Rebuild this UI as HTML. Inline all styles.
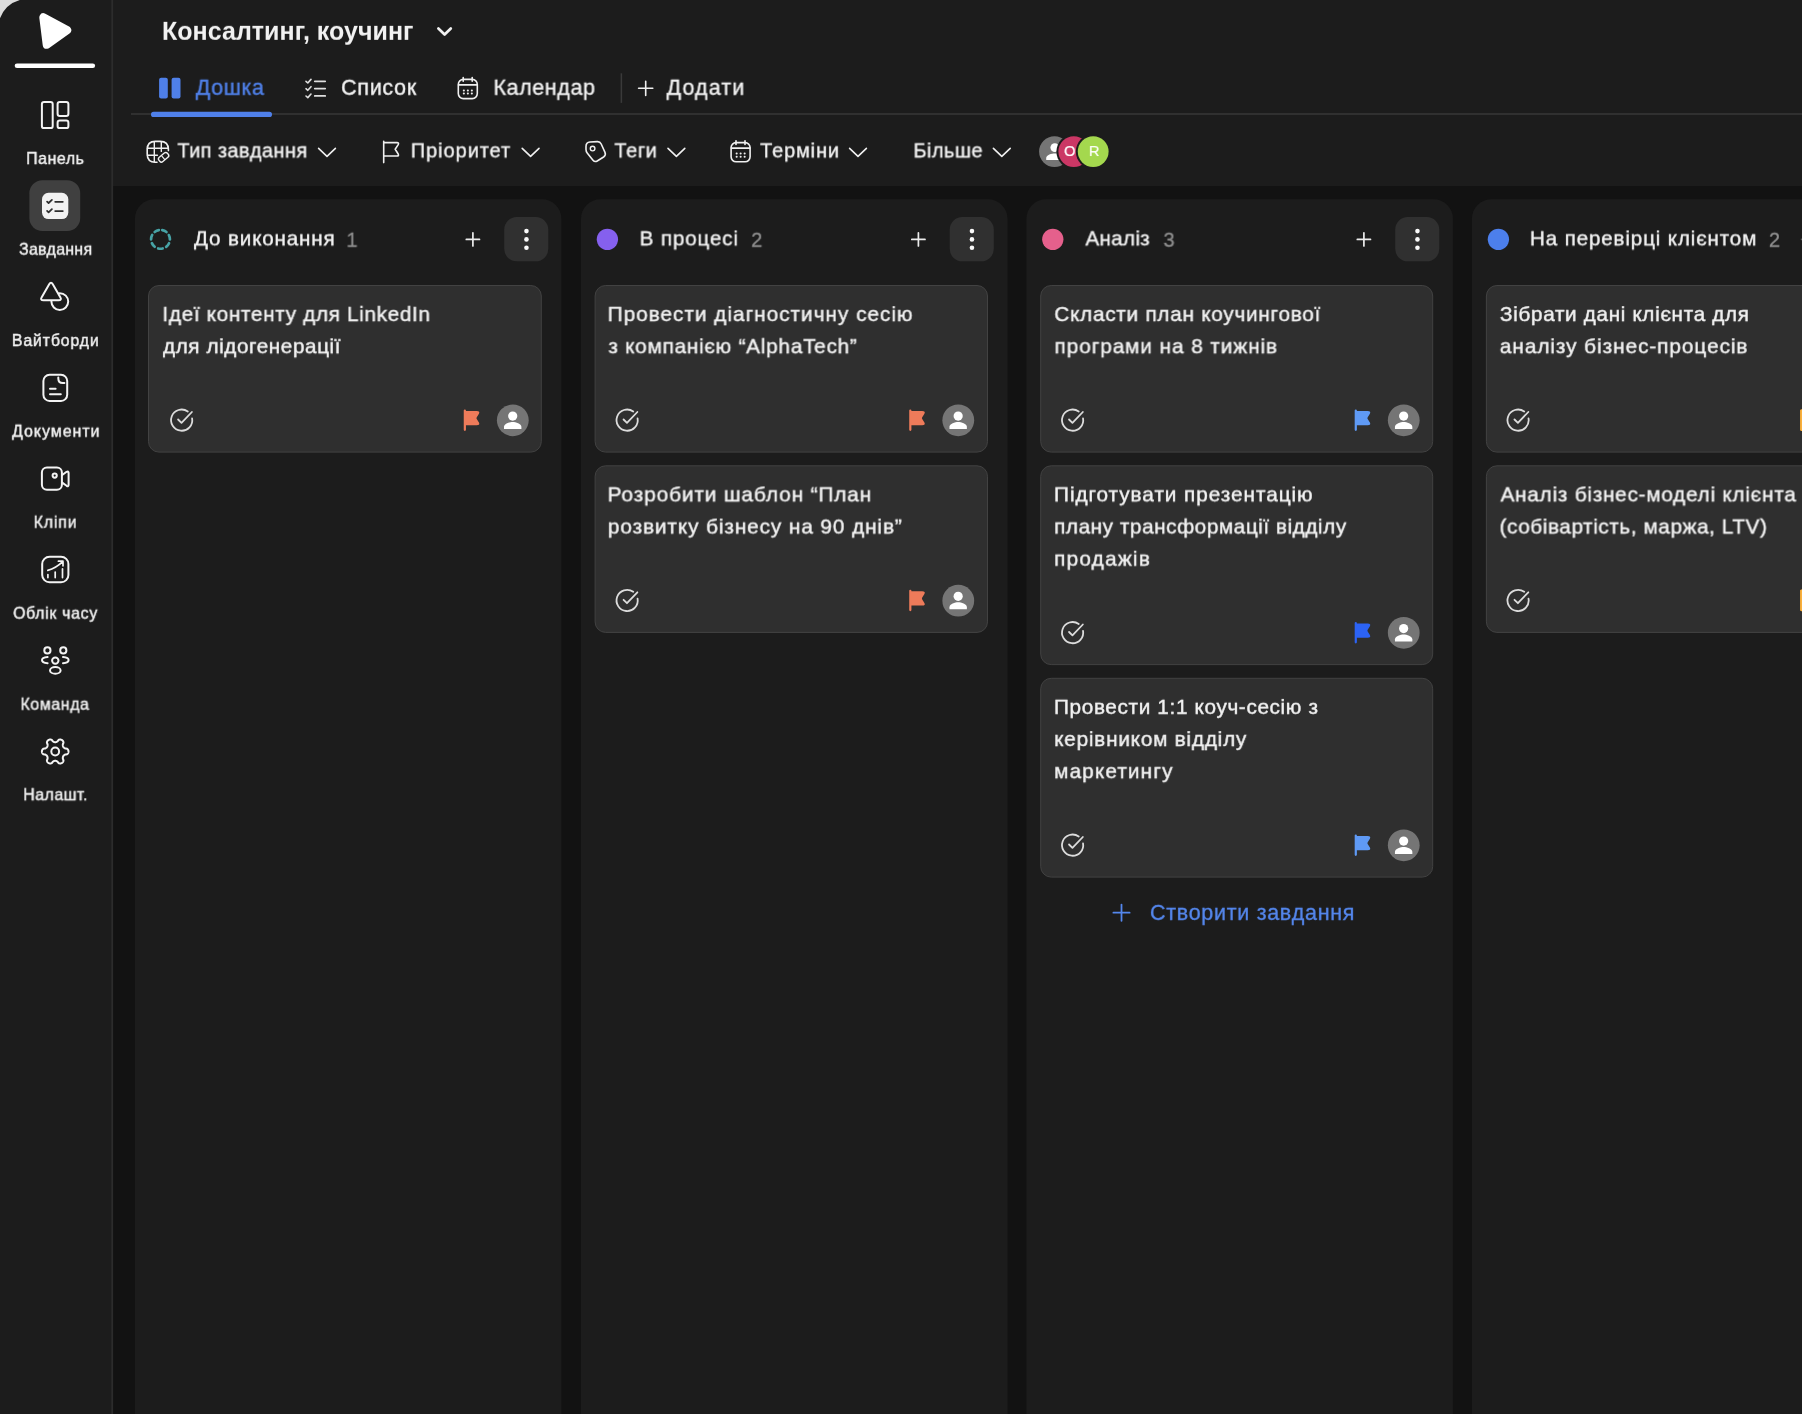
<!DOCTYPE html>
<html lang="uk"><head><meta charset="utf-8"><title>Консалтинг, коучинг</title>
<style>
html,body{margin:0;padding:0;background:#121212;}
body{width:1802px;height:1414px;position:relative;overflow:hidden;font-family:"Liberation Sans", sans-serif;}
.t{position:absolute;white-space:nowrap;line-height:1;will-change:transform;transform-origin:0 0;}
.side{position:absolute;left:0;top:0;width:113px;height:1414px;background:#1c1c1c;}
.head{position:absolute;left:113px;top:0;width:1689px;height:186px;background:#1c1c1c;}
</style></head><body>
<div class="head"></div>
<div class="side"></div>
<svg style="position:absolute;left:0;top:0" width="1802" height="1414" viewBox="0 0 1802 1414">
<rect x="111.3" y="0" width="1.8" height="1414" fill="#2c2c2c"/>
<!-- window corner -->
<g><path d="M0 0 H19.8 A30 30 0 0 0 0 18.3 Z" fill="#dcdcdc"/></g>
<!-- logo -->
<g>
<path d="M43.4 17.4 L46.8 44.7 L67.1 30.1 Z" fill="#fff" stroke="#fff" stroke-width="8.2" stroke-linejoin="round"/>
<rect x="14.7" y="63.4" width="80.4" height="4.6" rx="2.3" fill="#fff"/>
</g>
<!-- sidebar icons -->
<g fill="none" stroke="#f4f4f4" stroke-width="2" stroke-linecap="round" stroke-linejoin="round">
<!-- panel -->
<rect x="41.9" y="101.9" width="10.8" height="26.2" rx="2.2"/>
<rect x="57.6" y="101.9" width="10.8" height="14" rx="2.2"/>
<rect x="57.6" y="120.6" width="10.8" height="7.5" rx="2.2"/>
<!-- tasks (active) -->
<rect x="29.4" y="180.2" width="50.8" height="50.8" rx="13" fill="#404040" stroke="none"/>
<rect x="42" y="192.8" width="26.3" height="26.3" rx="6.5" fill="#f2f2f2" stroke="none"/>
<g stroke="#2e2e2e" stroke-width="1.8">
<path d="M47.1 201.6 L48.6 203 L51.9 199.9 M55.2 201.8 H62.8"/>
<path d="M47.1 210.9 L48.6 212.3 L51.9 209.2 M55.2 211.1 H62.8"/>
</g>
<!-- whiteboards -->
<circle cx="59.8" cy="301.6" r="8.4"/>
<path d="M52.81 284.31 Q51.00 281.20 49.19 284.31 L41.71 297.19 Q39.90 300.30 43.50 300.30 L58.50 300.30 Q62.10 300.30 60.29 297.19 Z" fill="#1c1c1c"/>
<!-- documents -->
<rect x="43.4" y="374.8" width="23.8" height="26.1" rx="6.2"/>
<path d="M58.3 377.6 V378.4 Q58.3 382.9 62.8 382.9 H64.4"/>
<path d="M50 388.8 H55.6 M50 394.3 H60.8"/>
<!-- clips -->
<rect x="41.9" y="467.6" width="20" height="22.2" rx="5"/>
<path d="M62.2 475 L66.6 471.8 Q68.6 470.6 68.6 473 V484.6 Q68.6 487 66.6 485.8 L62.2 482.6"/>
<circle cx="54.7" cy="475.6" r="2.1"/>
<!-- time -->
<rect x="42.2" y="556.7" width="26.2" height="25.6" rx="7.4"/>
<path d="M47.9 577.6 V574.6 M55.2 577.6 V572 M62.5 577.6 V568.8" stroke-width="1.7"/>
<path d="M47.8 570.4 Q56 568 62.4 561.8 M58.4 561.2 H63 V565.8" stroke-width="1.7"/>
<!-- team -->
<circle cx="47.4" cy="650.4" r="3.1"/>
<circle cx="63.3" cy="650.4" r="3.1"/>
<circle cx="55.3" cy="660.6" r="3.2"/>
<ellipse cx="55.3" cy="670.4" rx="5.3" ry="3.3"/>
<path d="M47.6 657 Q42 657.4 42 660 Q42 662.8 47.6 663.2"/>
<path d="M63 657 Q68.6 657.4 68.6 660 Q68.6 662.8 63 663.2"/>
<!-- settings -->
<circle cx="55.2" cy="751.5" r="3.9"/>
<path d="M68.50 751.50 L68.48 751.85 L68.43 752.19 L68.34 752.53 L68.21 752.87 L68.04 753.19 L67.84 753.50 L67.58 753.80 L67.28 754.07 L66.89 754.31 L66.11 754.42 L65.34 754.50 L64.95 754.67 L64.63 754.84 L64.36 755.01 L64.11 755.19 L63.90 755.37 L63.71 755.56 L63.53 755.75 L63.38 755.94 L63.25 756.15 L63.14 756.37 L63.05 756.59 L62.97 756.84 L62.90 757.10 L62.85 757.37 L62.82 757.67 L62.81 758.00 L62.82 758.36 L62.87 758.78 L63.19 759.49 L63.47 760.22 L63.46 760.68 L63.38 761.08 L63.25 761.44 L63.09 761.78 L62.89 762.08 L62.66 762.36 L62.41 762.61 L62.14 762.83 L61.85 763.02 L61.54 763.18 L61.21 763.30 L60.87 763.39 L60.52 763.45 L60.16 763.47 L59.78 763.44 L59.40 763.37 L59.02 763.24 L58.61 763.03 L58.12 762.41 L57.67 761.79 L57.33 761.53 L57.02 761.34 L56.73 761.19 L56.46 761.06 L56.20 760.97 L55.94 760.89 L55.69 760.84 L55.44 760.81 L55.20 760.80 L54.96 760.81 L54.71 760.84 L54.46 760.89 L54.20 760.97 L53.94 761.06 L53.67 761.19 L53.38 761.34 L53.07 761.53 L52.73 761.79 L52.28 762.41 L51.79 763.03 L51.38 763.24 L51.00 763.37 L50.62 763.44 L50.24 763.47 L49.88 763.45 L49.53 763.39 L49.19 763.30 L48.86 763.18 L48.55 763.02 L48.26 762.83 L47.99 762.61 L47.74 762.36 L47.51 762.08 L47.31 761.78 L47.15 761.44 L47.02 761.08 L46.94 760.68 L46.93 760.22 L47.21 759.49 L47.53 758.78 L47.58 758.36 L47.59 758.00 L47.58 757.67 L47.55 757.37 L47.50 757.10 L47.43 756.84 L47.35 756.59 L47.26 756.37 L47.15 756.15 L47.02 755.94 L46.87 755.75 L46.69 755.56 L46.50 755.37 L46.29 755.19 L46.04 755.01 L45.77 754.84 L45.45 754.67 L45.06 754.50 L44.29 754.42 L43.51 754.31 L43.12 754.07 L42.82 753.80 L42.56 753.50 L42.36 753.19 L42.19 752.87 L42.06 752.53 L41.97 752.19 L41.92 751.85 L41.90 751.50 L41.92 751.15 L41.97 750.81 L42.06 750.47 L42.19 750.13 L42.36 749.81 L42.56 749.50 L42.82 749.20 L43.12 748.93 L43.51 748.69 L44.29 748.58 L45.06 748.50 L45.45 748.33 L45.77 748.16 L46.04 747.99 L46.29 747.81 L46.50 747.63 L46.69 747.44 L46.87 747.25 L47.02 747.06 L47.15 746.85 L47.26 746.63 L47.35 746.41 L47.43 746.16 L47.50 745.90 L47.55 745.63 L47.58 745.33 L47.59 745.00 L47.58 744.64 L47.53 744.22 L47.21 743.51 L46.93 742.78 L46.94 742.32 L47.02 741.92 L47.15 741.56 L47.31 741.22 L47.51 740.92 L47.74 740.64 L47.99 740.39 L48.26 740.17 L48.55 739.98 L48.86 739.82 L49.19 739.70 L49.53 739.61 L49.88 739.55 L50.24 739.53 L50.62 739.56 L51.00 739.63 L51.38 739.76 L51.79 739.97 L52.28 740.59 L52.73 741.21 L53.07 741.47 L53.38 741.66 L53.67 741.81 L53.94 741.94 L54.20 742.03 L54.46 742.11 L54.71 742.16 L54.96 742.19 L55.20 742.20 L55.44 742.19 L55.69 742.16 L55.94 742.11 L56.20 742.03 L56.46 741.94 L56.73 741.81 L57.02 741.66 L57.33 741.47 L57.67 741.21 L58.12 740.59 L58.61 739.97 L59.02 739.76 L59.40 739.63 L59.78 739.56 L60.16 739.53 L60.52 739.55 L60.87 739.61 L61.21 739.70 L61.54 739.82 L61.85 739.98 L62.14 740.17 L62.41 740.39 L62.66 740.64 L62.89 740.92 L63.09 741.22 L63.25 741.56 L63.38 741.92 L63.46 742.32 L63.47 742.78 L63.19 743.51 L62.87 744.22 L62.82 744.64 L62.81 745.00 L62.82 745.33 L62.85 745.63 L62.90 745.90 L62.97 746.16 L63.05 746.41 L63.14 746.63 L63.25 746.85 L63.38 747.06 L63.53 747.25 L63.71 747.44 L63.90 747.63 L64.11 747.81 L64.36 747.99 L64.63 748.16 L64.95 748.33 L65.34 748.50 L66.11 748.58 L66.89 748.69 L67.28 748.93 L67.58 749.20 L67.84 749.50 L68.04 749.81 L68.21 750.13 L68.34 750.47 L68.43 750.81 L68.48 751.15 L68.50 751.50 Z"/>
</g>
<!-- header lines -->
<rect x="131" y="113.3" width="1671" height="1.4" fill="#3a3a3a"/>
<rect x="151" y="111.8" width="121" height="5.2" rx="2.6" fill="#4f80ea"/>
<rect x="620.6" y="73.3" width="1.5" height="29.6" fill="#3a3a3a"/>
<!-- header icons -->
<g fill="none" stroke="#f0f0f0" stroke-width="1.6" stroke-linecap="round" stroke-linejoin="round">
<!-- title chevron -->
<path d="M438.4 28.5 L444.6 34.5 L450.8 28.5" stroke-width="2.7"/>
<!-- board icon -->
<rect x="159.1" y="77.8" width="8.7" height="20.6" rx="2" fill="#4f80ea" stroke="none"/>
<rect x="171.6" y="77.8" width="8.9" height="20.6" rx="2" fill="#4f80ea" stroke="none"/>
<!-- list icon -->
<path d="M314.8 81.3 H325.2 M314.8 88.6 H325.2 M314.8 95.9 H325.2" stroke-width="1.8" stroke="#dedede"/>
<path d="M306 81.4 L307.8 83 L311 79.4 M306 88.7 L307.8 90.3 L311 86.7 M306 96 L307.8 97.6 L311 94" stroke-width="1.6" stroke="#dedede"/>
<!-- calendar icon (tab) -->
<g id="cal1">
<rect x="458.3" y="79.4" width="19" height="19.2" rx="5"/>
<path d="M458.6 84.9 H477 M463.2 77.6 V81.2 M472.2 77.6 V81.2"/>
<path d="M463.8 90.4 h0.1 M467.8 90.4 h0.1 M471.8 90.4 h0.1 M463.8 93.6 h0.1 M467.8 93.6 h0.1 M471.8 93.6 h0.1" stroke-width="2"/>
</g>
<!-- plus -->
<path d="M645.7 81.2 V95.4 M638.6 88.3 H652.8"/>
<!-- type icon -->
<path d="M157 162.2 H155.4 Q147.2 162.2 147.2 154 V149.6 Q147.2 141.4 155.4 141.4 H160.2 Q168.4 141.4 168.4 149.6 V150.6"/>
<path d="M154.3 141.6 V162 M161.3 141.6 V151.4 M147.4 148.3 H168.2 M147.4 155.3 H157.4" stroke-width="1.4"/>
<rect x="158.1" y="154.5" width="11" height="5.6" rx="2.2" transform="rotate(-40 163.6 157.3)" fill="#1c1c1c" stroke-width="1.4"/>
<path d="M161.9 156.2 L164.6 159.4" stroke-width="1.2"/>
<!-- flag outline -->
<path d="M383.7 141.2 V162.6 M383.7 142.6 H397 Q399.2 142.6 398.2 144.6 L395.2 149.3 L398.2 154 Q399.2 156 397 156 H383.7"/>
<!-- tag -->
<path d="M586 146.4 Q586 142.4 590 142 L597.2 141.6 Q600 141.4 601.2 144 L605 152.4 Q606.2 155.2 603.6 157 L597.2 161 Q594.8 162.4 593 160.2 L587.2 153 Q586 151.6 586 149.6 Z"/>
<circle cx="592.6" cy="148.6" r="2.3" stroke-width="1.4"/>
<!-- calendar icon (filter) -->
<g transform="translate(272.8 63.2)">
<rect x="458.3" y="79.4" width="19" height="19.2" rx="5"/>
<path d="M458.6 84.9 H477 M463.2 77.6 V81.2 M472.2 77.6 V81.2"/>
<path d="M463.8 90.4 h0.1 M467.8 90.4 h0.1 M471.8 90.4 h0.1 M463.8 93.6 h0.1 M467.8 93.6 h0.1 M471.8 93.6 h0.1" stroke-width="2"/>
</g>
<!-- chevrons -->
<path d="M318.6 148.4 L327 156.4 L335.4 148.4"/>
<path d="M522.2 148.4 L530.6 156.4 L539 148.4"/>
<path d="M668 148.4 L676.4 156.4 L684.8 148.4"/>
<path d="M849.6 148.4 L858 156.4 L866.4 148.4"/>
<path d="M993.4 148.4 L1001.8 156.4 L1010.2 148.4"/>
</g>
<!-- avatars -->
<g>
<circle cx="1054.5" cy="151.6" r="17.4" fill="#1c1c1c"/>
<circle cx="1054.5" cy="151.6" r="15.4" fill="#757575"/>
<circle cx="1054.8" cy="147.6" r="4.4" fill="#fff"/>
<path d="M1046.2 160 V158 C1046.2 154.8 1051.8 153.4 1054.8 153.4 C1057.8 153.4 1063.4 154.8 1063.4 158 V160 Z" fill="#fff"/>
<circle cx="1073.8" cy="151.6" r="17.4" fill="#1c1c1c"/>
<circle cx="1073.8" cy="151.6" r="15.4" fill="#cb3765"/>
<circle cx="1093.2" cy="151.6" r="17.4" fill="#1c1c1c"/>
<circle cx="1093.2" cy="151.6" r="15.4" fill="#a4d84e"/>
</g>

<rect x="134.90" y="199.20" width="426.50" height="1300.00" rx="19.50" fill="#1c1c1c"/>
<circle cx="160.5" cy="239.35" r="9.4" fill="none" stroke="#47a3a6" stroke-width="2.7" stroke-dasharray="4.6 3.837" stroke-dashoffset="-1.8" stroke-linecap="round" transform="rotate(-90 160.5 239.35)"/>
<path d="M472.90 232.80 v13.2 M466.30 239.4 h13.2" stroke="#ececec" stroke-width="1.7" stroke-linecap="round" fill="none"/>
<rect x="504.25" y="217.00" width="44.00" height="44.30" rx="12.50" fill="#303030"/>
<circle cx="526.45" cy="231.1" r="2.3" fill="#fafafa"/>
<circle cx="526.45" cy="239.4" r="2.3" fill="#fafafa"/>
<circle cx="526.45" cy="247.8" r="2.3" fill="#fafafa"/>
<rect x="148.50" y="285.50" width="392.80" height="166.60" rx="10.50" fill="#2f2f2f" stroke="#424242" stroke-width="1"/>
<g transform="translate(168.70 407.00)" fill="none" stroke="#dcdcdc" stroke-width="1.8" stroke-linecap="round" stroke-linejoin="round"><path d="M23.4 11.3 A10.6 10.6 0 1 1 19.1 4.5"/><path d="M9.4 12.5 L12.8 15.9 L23.2 5"/></g>
<path transform="translate(463.65 409.20)" d="M0.1 1.3 A1.1 1.1 0 0 1 2.3 1.3 V1.8 H13 Q16.7 1.8 15.3 4.5 L13.1 8 Q12.5 8.95 13.1 9.9 L15.3 13.4 Q16.7 16.1 13 16.1 H2.3 V20.6 A1.1 1.1 0 0 1 0.1 20.6 Z" fill="#ee7b5a"/>
<g transform="translate(496.80 404.35)"><circle cx="16" cy="16" r="15.9" fill="#757575"/><circle cx="15.9" cy="11.7" r="4.6" fill="#fff"/><path d="M7.2 24.6 L7.2 22.5 C7.2 19.3 12.9 17.6 15.9 17.6 C18.9 17.6 24.6 19.3 24.6 22.5 L24.6 24.6 Z" fill="#fff"/></g>
<rect x="581.00" y="199.20" width="426.50" height="1300.00" rx="19.50" fill="#1c1c1c"/>
<circle cx="607.4" cy="239.35" r="10.65" fill="#8560ee"/>
<path d="M918.40 232.80 v13.2 M911.80 239.4 h13.2" stroke="#ececec" stroke-width="1.7" stroke-linecap="round" fill="none"/>
<rect x="949.75" y="217.00" width="44.00" height="44.30" rx="12.50" fill="#303030"/>
<circle cx="971.95" cy="231.1" r="2.3" fill="#fafafa"/>
<circle cx="971.95" cy="239.4" r="2.3" fill="#fafafa"/>
<circle cx="971.95" cy="247.8" r="2.3" fill="#fafafa"/>
<rect x="595.10" y="285.50" width="392.40" height="166.60" rx="10.50" fill="#2f2f2f" stroke="#424242" stroke-width="1"/>
<g transform="translate(614.17 407.00)" fill="none" stroke="#dcdcdc" stroke-width="1.8" stroke-linecap="round" stroke-linejoin="round"><path d="M23.4 11.3 A10.6 10.6 0 1 1 19.1 4.5"/><path d="M9.4 12.5 L12.8 15.9 L23.2 5"/></g>
<path transform="translate(909.12 409.20)" d="M0.1 1.3 A1.1 1.1 0 0 1 2.3 1.3 V1.8 H13 Q16.7 1.8 15.3 4.5 L13.1 8 Q12.5 8.95 13.1 9.9 L15.3 13.4 Q16.7 16.1 13 16.1 H2.3 V20.6 A1.1 1.1 0 0 1 0.1 20.6 Z" fill="#ee7b5a"/>
<g transform="translate(942.27 404.35)"><circle cx="16" cy="16" r="15.9" fill="#757575"/><circle cx="15.9" cy="11.7" r="4.6" fill="#fff"/><path d="M7.2 24.6 L7.2 22.5 C7.2 19.3 12.9 17.6 15.9 17.6 C18.9 17.6 24.6 19.3 24.6 22.5 L24.6 24.6 Z" fill="#fff"/></g>
<rect x="595.10" y="465.80" width="392.40" height="166.60" rx="10.50" fill="#2f2f2f" stroke="#424242" stroke-width="1"/>
<g transform="translate(614.17 587.30)" fill="none" stroke="#dcdcdc" stroke-width="1.8" stroke-linecap="round" stroke-linejoin="round"><path d="M23.4 11.3 A10.6 10.6 0 1 1 19.1 4.5"/><path d="M9.4 12.5 L12.8 15.9 L23.2 5"/></g>
<path transform="translate(909.12 589.50)" d="M0.1 1.3 A1.1 1.1 0 0 1 2.3 1.3 V1.8 H13 Q16.7 1.8 15.3 4.5 L13.1 8 Q12.5 8.95 13.1 9.9 L15.3 13.4 Q16.7 16.1 13 16.1 H2.3 V20.6 A1.1 1.1 0 0 1 0.1 20.6 Z" fill="#ee7b5a"/>
<g transform="translate(942.27 584.65)"><circle cx="16" cy="16" r="15.9" fill="#757575"/><circle cx="15.9" cy="11.7" r="4.6" fill="#fff"/><path d="M7.2 24.6 L7.2 22.5 C7.2 19.3 12.9 17.6 15.9 17.6 C18.9 17.6 24.6 19.3 24.6 22.5 L24.6 24.6 Z" fill="#fff"/></g>
<rect x="1026.45" y="199.20" width="426.50" height="1300.00" rx="19.50" fill="#1c1c1c"/>
<circle cx="1052.8" cy="239.35" r="10.65" fill="#e5608c"/>
<path d="M1363.90 232.80 v13.2 M1357.30 239.4 h13.2" stroke="#ececec" stroke-width="1.7" stroke-linecap="round" fill="none"/>
<rect x="1395.25" y="217.00" width="44.00" height="44.30" rx="12.50" fill="#303030"/>
<circle cx="1417.45" cy="231.1" r="2.3" fill="#fafafa"/>
<circle cx="1417.45" cy="239.4" r="2.3" fill="#fafafa"/>
<circle cx="1417.45" cy="247.8" r="2.3" fill="#fafafa"/>
<rect x="1040.70" y="285.50" width="392.00" height="166.60" rx="10.50" fill="#2f2f2f" stroke="#424242" stroke-width="1"/>
<g transform="translate(1059.64 407.00)" fill="none" stroke="#dcdcdc" stroke-width="1.8" stroke-linecap="round" stroke-linejoin="round"><path d="M23.4 11.3 A10.6 10.6 0 1 1 19.1 4.5"/><path d="M9.4 12.5 L12.8 15.9 L23.2 5"/></g>
<path transform="translate(1354.59 409.20)" d="M0.1 1.3 A1.1 1.1 0 0 1 2.3 1.3 V1.8 H13 Q16.7 1.8 15.3 4.5 L13.1 8 Q12.5 8.95 13.1 9.9 L15.3 13.4 Q16.7 16.1 13 16.1 H2.3 V20.6 A1.1 1.1 0 0 1 0.1 20.6 Z" fill="#5f9af5"/>
<g transform="translate(1387.74 404.35)"><circle cx="16" cy="16" r="15.9" fill="#757575"/><circle cx="15.9" cy="11.7" r="4.6" fill="#fff"/><path d="M7.2 24.6 L7.2 22.5 C7.2 19.3 12.9 17.6 15.9 17.6 C18.9 17.6 24.6 19.3 24.6 22.5 L24.6 24.6 Z" fill="#fff"/></g>
<rect x="1040.70" y="465.80" width="392.00" height="198.80" rx="10.50" fill="#2f2f2f" stroke="#424242" stroke-width="1"/>
<g transform="translate(1059.64 619.50)" fill="none" stroke="#dcdcdc" stroke-width="1.8" stroke-linecap="round" stroke-linejoin="round"><path d="M23.4 11.3 A10.6 10.6 0 1 1 19.1 4.5"/><path d="M9.4 12.5 L12.8 15.9 L23.2 5"/></g>
<path transform="translate(1354.59 621.70)" d="M0.1 1.3 A1.1 1.1 0 0 1 2.3 1.3 V1.8 H13 Q16.7 1.8 15.3 4.5 L13.1 8 Q12.5 8.95 13.1 9.9 L15.3 13.4 Q16.7 16.1 13 16.1 H2.3 V20.6 A1.1 1.1 0 0 1 0.1 20.6 Z" fill="#2c63f5"/>
<g transform="translate(1387.74 616.85)"><circle cx="16" cy="16" r="15.9" fill="#757575"/><circle cx="15.9" cy="11.7" r="4.6" fill="#fff"/><path d="M7.2 24.6 L7.2 22.5 C7.2 19.3 12.9 17.6 15.9 17.6 C18.9 17.6 24.6 19.3 24.6 22.5 L24.6 24.6 Z" fill="#fff"/></g>
<rect x="1040.70" y="678.30" width="392.00" height="198.80" rx="10.50" fill="#2f2f2f" stroke="#424242" stroke-width="1"/>
<g transform="translate(1059.64 832.00)" fill="none" stroke="#dcdcdc" stroke-width="1.8" stroke-linecap="round" stroke-linejoin="round"><path d="M23.4 11.3 A10.6 10.6 0 1 1 19.1 4.5"/><path d="M9.4 12.5 L12.8 15.9 L23.2 5"/></g>
<path transform="translate(1354.59 834.20)" d="M0.1 1.3 A1.1 1.1 0 0 1 2.3 1.3 V1.8 H13 Q16.7 1.8 15.3 4.5 L13.1 8 Q12.5 8.95 13.1 9.9 L15.3 13.4 Q16.7 16.1 13 16.1 H2.3 V20.6 A1.1 1.1 0 0 1 0.1 20.6 Z" fill="#5f9af5"/>
<g transform="translate(1387.74 829.35)"><circle cx="16" cy="16" r="15.9" fill="#757575"/><circle cx="15.9" cy="11.7" r="4.6" fill="#fff"/><path d="M7.2 24.6 L7.2 22.5 C7.2 19.3 12.9 17.6 15.9 17.6 C18.9 17.6 24.6 19.3 24.6 22.5 L24.6 24.6 Z" fill="#fff"/></g>
<path d="M1121.5 904.6 v16.2 M1113.4 912.7 h16.2" stroke="#5487ee" stroke-width="1.8" stroke-linecap="round" fill="none"/>
<rect x="1471.90" y="199.20" width="426.50" height="1300.00" rx="19.50" fill="#1c1c1c"/>
<circle cx="1498.4" cy="239.35" r="10.65" fill="#4c7fec"/>
<path d="M1809.40 232.80 v13.2 M1802.80 239.4 h13.2" stroke="#ececec" stroke-width="1.7" stroke-linecap="round" fill="none"/>
<rect x="1840.75" y="217.00" width="44.00" height="44.30" rx="12.50" fill="#303030"/>
<circle cx="1862.95" cy="231.1" r="2.3" fill="#fafafa"/>
<circle cx="1862.95" cy="239.4" r="2.3" fill="#fafafa"/>
<circle cx="1862.95" cy="247.8" r="2.3" fill="#fafafa"/>
<rect x="1486.40" y="285.50" width="392.00" height="166.60" rx="10.50" fill="#2f2f2f" stroke="#424242" stroke-width="1"/>
<g transform="translate(1505.11 407.00)" fill="none" stroke="#dcdcdc" stroke-width="1.8" stroke-linecap="round" stroke-linejoin="round"><path d="M23.4 11.3 A10.6 10.6 0 1 1 19.1 4.5"/><path d="M9.4 12.5 L12.8 15.9 L23.2 5"/></g>
<path transform="translate(1800.06 409.20)" d="M0.1 1.3 A1.1 1.1 0 0 1 2.3 1.3 V1.8 H13 Q16.7 1.8 15.3 4.5 L13.1 8 Q12.5 8.95 13.1 9.9 L15.3 13.4 Q16.7 16.1 13 16.1 H2.3 V20.6 A1.1 1.1 0 0 1 0.1 20.6 Z" fill="#fbb03b"/>
<g transform="translate(1833.21 404.35)"><circle cx="16" cy="16" r="15.9" fill="#757575"/><circle cx="15.9" cy="11.7" r="4.6" fill="#fff"/><path d="M7.2 24.6 L7.2 22.5 C7.2 19.3 12.9 17.6 15.9 17.6 C18.9 17.6 24.6 19.3 24.6 22.5 L24.6 24.6 Z" fill="#fff"/></g>
<rect x="1486.40" y="465.80" width="392.00" height="166.60" rx="10.50" fill="#2f2f2f" stroke="#424242" stroke-width="1"/>
<g transform="translate(1505.11 587.30)" fill="none" stroke="#dcdcdc" stroke-width="1.8" stroke-linecap="round" stroke-linejoin="round"><path d="M23.4 11.3 A10.6 10.6 0 1 1 19.1 4.5"/><path d="M9.4 12.5 L12.8 15.9 L23.2 5"/></g>
<path transform="translate(1800.06 589.50)" d="M0.1 1.3 A1.1 1.1 0 0 1 2.3 1.3 V1.8 H13 Q16.7 1.8 15.3 4.5 L13.1 8 Q12.5 8.95 13.1 9.9 L15.3 13.4 Q16.7 16.1 13 16.1 H2.3 V20.6 A1.1 1.1 0 0 1 0.1 20.6 Z" fill="#fbb03b"/>
<g transform="translate(1833.21 584.65)"><circle cx="16" cy="16" r="15.9" fill="#757575"/><circle cx="15.9" cy="11.7" r="4.6" fill="#fff"/><path d="M7.2 24.6 L7.2 22.5 C7.2 19.3 12.9 17.6 15.9 17.6 C18.9 17.6 24.6 19.3 24.6 22.5 L24.6 24.6 Z" fill="#fff"/></g>
<rect x="1800.8" y="238.6" width="2" height="1.6" fill="#5a5a5a"/>
<rect x="1800.4" y="409.5" width="4" height="21.2" rx="1.2" fill="#fbb03b"/>
<rect x="1800.4" y="589.4" width="4" height="21.2" rx="1.2" fill="#fbb03b"/>
</svg>
<div id="txt">
<div class="t" id="t0" style="left:161px;top:18px;font-size:25px;font-weight:700;color:#f2f2f2;letter-spacing:0.035px;transform:translate(1.00px,0.84px) rotate(0.001deg);">Консалтинг, коучинг</div>
<div class="t" id="t1" style="left:195px;top:77px;font-size:21.5px;font-weight:400;color:#4f80ea;letter-spacing:0.622px;transform:translate(0.68px,0.80px) rotate(0.001deg);-webkit-text-stroke:0.35px #4f80ea;">Дошка</div>
<div class="t" id="t2" style="left:341px;top:77px;font-size:21.5px;font-weight:400;color:#f2f2f2;letter-spacing:0.730px;transform:translate(0.10px,0.80px) rotate(0.001deg);-webkit-text-stroke:0.35px #f2f2f2;">Список</div>
<div class="t" id="t3" style="left:493px;top:77px;font-size:21.5px;font-weight:400;color:#f2f2f2;letter-spacing:0.579px;transform:translate(0.53px,0.80px) rotate(0.001deg);-webkit-text-stroke:0.35px #f2f2f2;">Календар</div>
<div class="t" id="t4" style="left:666px;top:77px;font-size:21.5px;font-weight:400;color:#f2f2f2;letter-spacing:1.105px;transform:translate(0.50px,0.80px) rotate(0.001deg);-webkit-text-stroke:0.35px #f2f2f2;">Додати</div>
<div class="t" id="t5" style="left:177px;top:140px;font-size:20px;font-weight:400;color:#f2f2f2;letter-spacing:0.401px;transform:translate(0.43px,0.42px) rotate(0.001deg);-webkit-text-stroke:0.35px #f2f2f2;">Тип завдання</div>
<div class="t" id="t6" style="left:410px;top:140px;font-size:20px;font-weight:400;color:#f2f2f2;letter-spacing:0.938px;transform:translate(0.80px,0.42px) rotate(0.001deg);-webkit-text-stroke:0.35px #f2f2f2;">Пріоритет</div>
<div class="t" id="t7" style="left:614px;top:140px;font-size:20px;font-weight:400;color:#f2f2f2;letter-spacing:0.594px;transform:translate(0.42px,0.42px) rotate(0.001deg);-webkit-text-stroke:0.35px #f2f2f2;">Теги</div>
<div class="t" id="t8" style="left:760px;top:140px;font-size:20px;font-weight:400;color:#f2f2f2;letter-spacing:0.877px;transform:translate(0.13px,0.42px) rotate(0.001deg);-webkit-text-stroke:0.35px #f2f2f2;">Терміни</div>
<div class="t" id="t9" style="left:913px;top:140px;font-size:20px;font-weight:400;color:#f2f2f2;letter-spacing:0.438px;transform:translate(0.46px,0.42px) rotate(0.001deg);-webkit-text-stroke:0.35px #f2f2f2;">Більше</div>
<div class="t" id="t10" style="left:1064px;top:144px;font-size:14.6px;font-weight:400;color:#fff;letter-spacing:-1.059px;transform:translate(0.12px,0.04px) rotate(0.001deg);-webkit-text-stroke:0.2px #fff;">O</div>
<div class="t" id="t11" style="left:1088px;top:144px;font-size:14.6px;font-weight:400;color:#fff;letter-spacing:-2.747px;transform:translate(0.89px,0.04px) rotate(0.001deg);-webkit-text-stroke:0.2px #fff;">R</div>
<div class="t" id="t12" style="left:26px;top:151px;font-size:15.9px;font-weight:400;color:#f2f2f2;letter-spacing:0.578px;transform:translate(0.16px,0.04px) rotate(0.001deg);-webkit-text-stroke:0.4px #f2f2f2;">Панель</div>
<div class="t" id="t13" style="left:19px;top:241px;font-size:15.9px;font-weight:400;color:#f2f2f2;letter-spacing:0.290px;transform:translate(0.07px,0.74px) rotate(0.001deg);-webkit-text-stroke:0.4px #f2f2f2;">Завдання</div>
<div class="t" id="t14" style="left:11px;top:333px;font-size:15.9px;font-weight:400;color:#f2f2f2;letter-spacing:0.829px;transform:translate(0.90px,0.04px) rotate(0.001deg);-webkit-text-stroke:0.4px #f2f2f2;">Вайтборди</div>
<div class="t" id="t15" style="left:12px;top:423px;font-size:15.9px;font-weight:400;color:#f2f2f2;letter-spacing:1.010px;transform:translate(0.09px,0.74px) rotate(0.001deg);-webkit-text-stroke:0.4px #f2f2f2;">Документи</div>
<div class="t" id="t16" style="left:33px;top:514px;font-size:15.9px;font-weight:400;color:#f2f2f2;letter-spacing:0.834px;transform:translate(0.72px,0.74px) rotate(0.001deg);-webkit-text-stroke:0.4px #f2f2f2;">Кліпи</div>
<div class="t" id="t17" style="left:13px;top:605px;font-size:15.9px;font-weight:400;color:#f2f2f2;letter-spacing:0.687px;transform:translate(0.17px,0.74px) rotate(0.001deg);-webkit-text-stroke:0.4px #f2f2f2;">Облік часу</div>
<div class="t" id="t18" style="left:20px;top:696px;font-size:15.9px;font-weight:400;color:#f2f2f2;letter-spacing:0.615px;transform:translate(0.55px,0.74px) rotate(0.001deg);-webkit-text-stroke:0.4px #f2f2f2;">Команда</div>
<div class="t" id="t19" style="left:23px;top:787px;font-size:15.9px;font-weight:400;color:#f2f2f2;letter-spacing:0.526px;transform:translate(0.28px,0.24px) rotate(0.001deg);-webkit-text-stroke:0.4px #f2f2f2;">Налашт.</div>
<div class="t" id="t20" style="left:193px;top:228px;font-size:20.7px;font-weight:400;color:#f2f2f2;letter-spacing:0.818px;transform:translate(0.97px,0.38px) rotate(0.001deg);-webkit-text-stroke:0.35px #f2f2f2;">До виконання</div>
<div class="t" id="t21" style="left:346px;top:229px;font-size:20px;font-weight:400;color:#8f8f8f;letter-spacing:-4.675px;transform:translate(0.43px,0.77px) rotate(0.001deg);-webkit-text-stroke:0.3px #8f8f8f;">1</div>
<div class="t" id="t22" style="left:162px;top:304px;font-size:20.8px;font-weight:400;color:#f2f2f2;letter-spacing:0.638px;transform:translate(0.43px,0.09px) rotate(0.001deg);-webkit-text-stroke:0.4px #f2f2f2;">Ідеї контенту для LinkedIn</div>
<div class="t" id="t23" style="left:162px;top:336px;font-size:20.8px;font-weight:400;color:#f2f2f2;letter-spacing:0.537px;transform:translate(0.93px,0.24px) rotate(0.001deg);-webkit-text-stroke:0.4px #f2f2f2;">для лідогенерації</div>
<div class="t" id="t24" style="left:639px;top:228px;font-size:20.7px;font-weight:400;color:#f2f2f2;letter-spacing:0.818px;transform:translate(0.65px,0.38px) rotate(0.001deg);-webkit-text-stroke:0.35px #f2f2f2;">В процесі</div>
<div class="t" id="t25" style="left:751px;top:229px;font-size:20px;font-weight:400;color:#8f8f8f;letter-spacing:-3.425px;transform:translate(0.21px,0.77px) rotate(0.001deg);-webkit-text-stroke:0.3px #8f8f8f;">2</div>
<div class="t" id="t26" style="left:607px;top:304px;font-size:20.8px;font-weight:400;color:#f2f2f2;letter-spacing:0.982px;transform:translate(0.68px,0.09px) rotate(0.001deg);-webkit-text-stroke:0.4px #f2f2f2;">Провести діагностичну сесію</div>
<div class="t" id="t27" style="left:608px;top:336px;font-size:20.8px;font-weight:400;color:#f2f2f2;letter-spacing:0.731px;transform:translate(0.37px,0.24px) rotate(0.001deg);-webkit-text-stroke:0.4px #f2f2f2;">з компанією “AlphaTech”</div>
<div class="t" id="t28" style="left:607px;top:484px;font-size:20.8px;font-weight:400;color:#f2f2f2;letter-spacing:0.888px;transform:translate(0.67px,0.39px) rotate(0.001deg);-webkit-text-stroke:0.4px #f2f2f2;">Розробити шаблон “План</div>
<div class="t" id="t29" style="left:607px;top:516px;font-size:20.8px;font-weight:400;color:#f2f2f2;letter-spacing:0.897px;transform:translate(0.84px,0.54px) rotate(0.001deg);-webkit-text-stroke:0.4px #f2f2f2;">розвитку бізнесу на 90 днів”</div>
<div class="t" id="t30" style="left:1085px;top:228px;font-size:20.7px;font-weight:400;color:#f2f2f2;letter-spacing:0.289px;transform:translate(0.44px,0.38px) rotate(0.001deg);-webkit-text-stroke:0.35px #f2f2f2;">Аналіз</div>
<div class="t" id="t31" style="left:1163px;top:229px;font-size:20px;font-weight:400;color:#8f8f8f;letter-spacing:-3.675px;transform:translate(0.48px,0.77px) rotate(0.001deg);-webkit-text-stroke:0.3px #8f8f8f;">3</div>
<div class="t" id="t32" style="left:1054px;top:304px;font-size:20.8px;font-weight:400;color:#f2f2f2;letter-spacing:0.720px;transform:translate(0.29px,0.09px) rotate(0.001deg);-webkit-text-stroke:0.4px #f2f2f2;">Скласти план коучингової</div>
<div class="t" id="t33" style="left:1054px;top:336px;font-size:20.8px;font-weight:400;color:#f2f2f2;letter-spacing:0.918px;transform:translate(0.51px,0.24px) rotate(0.001deg);-webkit-text-stroke:0.4px #f2f2f2;">програми на 8 тижнів</div>
<div class="t" id="t34" style="left:1053px;top:484px;font-size:20.8px;font-weight:400;color:#f2f2f2;letter-spacing:0.930px;transform:translate(0.98px,0.39px) rotate(0.001deg);-webkit-text-stroke:0.4px #f2f2f2;">Підготувати презентацію</div>
<div class="t" id="t35" style="left:1054px;top:516px;font-size:20.8px;font-weight:400;color:#f2f2f2;letter-spacing:0.524px;transform:translate(0.15px,0.54px) rotate(0.001deg);-webkit-text-stroke:0.4px #f2f2f2;">плану трансформації відділу</div>
<div class="t" id="t36" style="left:1054px;top:548px;font-size:20.8px;font-weight:400;color:#f2f2f2;letter-spacing:1.212px;transform:translate(0.15px,0.69px) rotate(0.001deg);-webkit-text-stroke:0.4px #f2f2f2;">продажів</div>
<div class="t" id="t37" style="left:1053px;top:696px;font-size:20.8px;font-weight:400;color:#f2f2f2;letter-spacing:0.617px;transform:translate(0.98px,0.89px) rotate(0.001deg);-webkit-text-stroke:0.4px #f2f2f2;">Провести 1:1 коуч-сесію з</div>
<div class="t" id="t38" style="left:1054px;top:729px;font-size:20.8px;font-weight:400;color:#f2f2f2;letter-spacing:0.759px;transform:translate(0.17px,0.04px) rotate(0.001deg);-webkit-text-stroke:0.4px #f2f2f2;">керівником відділу</div>
<div class="t" id="t39" style="left:1054px;top:761px;font-size:20.8px;font-weight:400;color:#f2f2f2;letter-spacing:1.114px;transform:translate(0.15px,0.19px) rotate(0.001deg);-webkit-text-stroke:0.4px #f2f2f2;">маркетингу</div>
<div class="t" id="t40" style="left:1149px;top:901px;font-size:21.6px;font-weight:400;color:#5487ee;letter-spacing:0.654px;transform:translate(0.93px,0.92px) rotate(0.001deg);-webkit-text-stroke:0.3px #5487ee;">Створити завдання</div>
<div class="t" id="t41" style="left:1529px;top:228px;font-size:20.7px;font-weight:400;color:#f2f2f2;letter-spacing:0.816px;transform:translate(0.90px,0.38px) rotate(0.001deg);-webkit-text-stroke:0.35px #f2f2f2;">На перевірці клієнтом</div>
<div class="t" id="t42" style="left:1768px;top:229px;font-size:20px;font-weight:400;color:#8f8f8f;letter-spacing:-2.425px;transform:translate(0.93px,0.77px) rotate(0.001deg);-webkit-text-stroke:0.3px #8f8f8f;">2</div>
<div class="t" id="t43" style="left:1499px;top:304px;font-size:20.8px;font-weight:400;color:#f2f2f2;letter-spacing:0.626px;transform:translate(0.92px,0.09px) rotate(0.001deg);-webkit-text-stroke:0.4px #f2f2f2;">Зібрати дані клієнта для</div>
<div class="t" id="t44" style="left:1499px;top:336px;font-size:20.8px;font-weight:400;color:#f2f2f2;letter-spacing:0.938px;transform:translate(0.84px,0.24px) rotate(0.001deg);-webkit-text-stroke:0.4px #f2f2f2;">аналізу бізнес-процесів</div>
<div class="t" id="t45" style="left:1500px;top:484px;font-size:20.8px;font-weight:400;color:#f2f2f2;letter-spacing:0.734px;transform:translate(0.57px,0.39px) rotate(0.001deg);-webkit-text-stroke:0.4px #f2f2f2;">Аналіз бізнес-моделі клієнта</div>
<div class="t" id="t46" style="left:1499px;top:516px;font-size:20.8px;font-weight:400;color:#f2f2f2;letter-spacing:0.554px;transform:translate(0.53px,0.54px) rotate(0.001deg);-webkit-text-stroke:0.4px #f2f2f2;">(собівартість, маржа, LTV)</div>
</div>
</body></html>
